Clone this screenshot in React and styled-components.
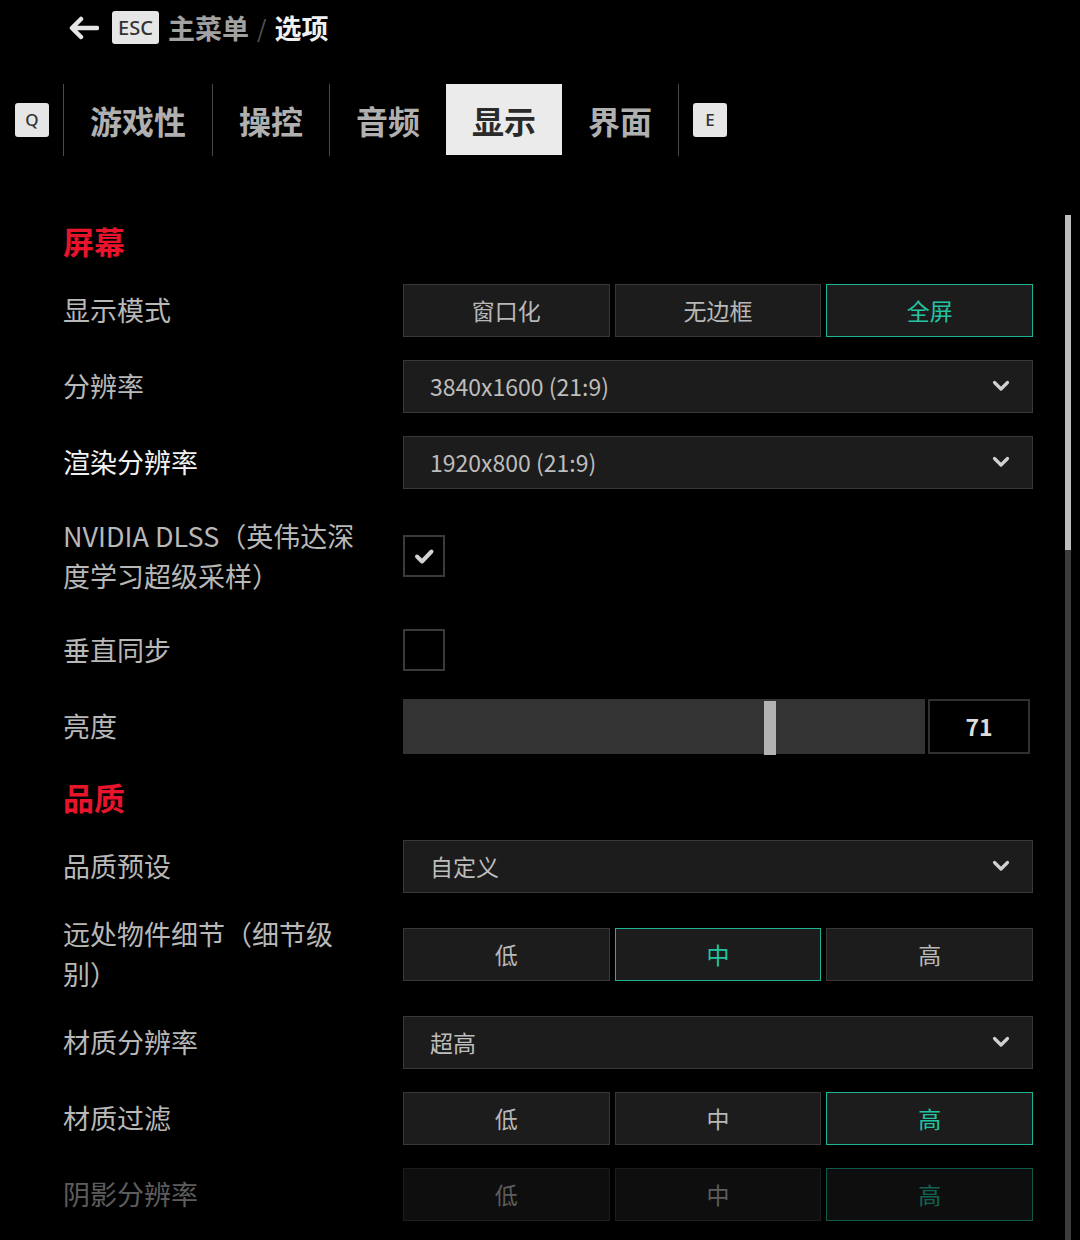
import React from 'react';
import styled, { createGlobalStyle } from 'styled-components';

const GlobalStyle = createGlobalStyle`
  html, body {
    margin: 0;
    padding: 0;
    background: #000;
    overflow: hidden;
  }
  body {
    font-family: "Noto Sans CJK SC", "Noto Sans", sans-serif;
    color: #b8b8b8;
  }
`;

const TEAL = '#1db394';

const Page = styled.div`
  width: 1080px;
  height: 1240px;
  background: #000;
  overflow: hidden;
`;

const Header = styled.div`
  display: flex;
  align-items: center;
  height: 55px;
  padding-left: 67px;
  gap: 9px;
`;

const KeyBadge = styled.span`
  display: inline-flex;
  align-items: center;
  justify-content: center;
  background: #e6e6e6;
  color: #333;
  border-radius: 3px;
  font-family: "Noto Sans", "Liberation Sans", sans-serif;
  font-weight: 500;
  width: ${(p) => p.w || 34}px;
  height: ${(p) => p.h || 34}px;
  font-size: ${(p) => p.fs || 17}px;
  line-height: 1;
`;

const Crumb = styled.span`
  font-size: 27px;
  font-weight: 700;
  color: ${(p) => (p.current ? '#f0f0f0' : '#a2a2a2')};
`;

const Slash = styled.span`
  font-size: 24px;
  color: #555;
  margin: 0 -1px;
`;

const Tabs = styled.div`
  display: flex;
  align-items: center;
  height: 71px;
  margin-top: 29px;
  padding-left: 15px;
`;

const TabDivider = styled.div`
  width: 1px;
  height: 72px;
  background: #4a4a4a;
  margin: ${(p) => p.m || '0'};
`;

const Tab = styled.div`
  height: 71px;
  display: flex;
  align-items: center;
  padding: 0 26px;
  font-size: 32px;
  font-weight: 700;
  background: ${(p) => (p.active ? '#ebebeb' : 'transparent')};
  color: ${(p) => (p.active ? '#2a2a2a' : '#b0b0b0')};
`;

const Main = styled.div`
  display: flex;
  margin-top: 53px;
  padding-left: 63px;
`;

const Settings = styled.div`
  width: 970px;
  display: flex;
  flex-direction: column;
`;

const SectionTitle = styled.div`
  height: 64px;
  display: flex;
  align-items: center;
  font-size: 31px;
  font-weight: 700;
  color: #e8142c;
`;

const Row = styled.div`
  height: ${(p) => p.h || 76}px;
  display: grid;
  grid-template-columns: 340px 630px;
  align-items: center;
  opacity: ${(p) => (p.faded ? 0.5 : 1)};
`;

const Label = styled.div`
  font-size: 27px;
  line-height: 40px;
  color: ${(p) => (p.bright ? '#f2f2f2' : '#b8b8b8')};
`;

const Segments = styled.div`
  display: grid;
  grid-template-columns: repeat(3, 1fr);
  gap: 5px;
  height: 53px;
`;

const Segment = styled.div`
  display: flex;
  align-items: center;
  justify-content: center;
  background: #1c1c1c;
  border: 1px solid ${(p) => (p.active ? TEAL : '#383838')};
  color: ${(p) => (p.active ? '#22c4a2' : '#b8b8b8')};
  font-size: 23px;
`;

const Dropdown = styled.div`
  height: 53px;
  display: flex;
  align-items: center;
  justify-content: space-between;
  background: #1c1c1c;
  border: 1px solid #383838;
  padding: 0 22px 0 26px;
  font-size: 23px;
  color: #bdbdbd;
  box-sizing: border-box;
`;

const Checkbox = styled.div`
  width: 42px;
  height: 42px;
  box-sizing: border-box;
  border: 2px solid #3a3a3a;
  display: flex;
  align-items: center;
  justify-content: center;
`;

const SliderWrap = styled.div`
  display: flex;
  gap: 3px;
  height: 55px;
`;

const Track = styled.div`
  position: relative;
  width: 522px;
  background: #333;
`;

const Thumb = styled.div`
  position: absolute;
  top: 2px;
  bottom: -1px;
  width: 12px;
  background: #b2b2b2;
`;

const ValueBox = styled.div`
  width: 102px;
  box-sizing: border-box;
  border: 2px solid #303030;
  background: #000;
  display: flex;
  align-items: center;
  justify-content: center;
  font-size: 23px;
  font-weight: 700;
  color: #dcdcdc;
`;

const ScrollBar = styled.div`
  margin-left: 32px;
  margin-top: 7px;
  width: 6px;
  height: 1030px;
  background: #3c3c3c;
  display: flex;
  flex-direction: column;
`;

const ScrollThumb = styled.div`
  height: 335px;
  background: #bdbdbd;
`;

const BackArrow = () => (
  <svg width="32" height="24" viewBox="0 0 32 24" style={{ marginRight: 4 }}>
    <path d="M30 12H6M14 3L5 12l9 9" fill="none" stroke="#e6e6e6" strokeWidth="4.5" strokeLinecap="round" strokeLinejoin="round" />
  </svg>
);

const Chevron = () => (
  <svg width="18" height="12" viewBox="0 0 18 12">
    <path d="M2.5 2.5L9 9l6.5-6.5" fill="none" stroke="#d0d0d0" strokeWidth="3.2" strokeLinecap="round" strokeLinejoin="round" />
  </svg>
);

const Check = () => (
  <svg width="22" height="18" viewBox="0 0 22 18">
    <path d="M4 9.5l5 5L18.5 4.5" fill="none" stroke="#d2d2d2" strokeWidth="4" strokeLinecap="round" strokeLinejoin="round" />
  </svg>
);

const SegRow = ({ options, active }) => (
  <Segments>
    {options.map((o, i) => (
      <Segment key={o} active={i === active}>{o}</Segment>
    ))}
  </Segments>
);

const Select = ({ value }) => (
  <Dropdown>
    <span>{value}</span>
    <Chevron />
  </Dropdown>
);

const LEVELS = ['低', '中', '高'];

export default function App() {
  const brightness = 71;
  return (
    <Page>
      <GlobalStyle />
      <Header>
        <BackArrow />
        <KeyBadge w={47} h={33} fs={20}>ESC</KeyBadge>
        <Crumb>主菜单</Crumb>
        <Slash>/</Slash>
        <Crumb current>选项</Crumb>
      </Header>

      <Tabs>
        <KeyBadge>Q</KeyBadge>
        <TabDivider m="0 0 0 14px" />
        <Tab>游戏性</Tab>
        <TabDivider />
        <Tab>操控</Tab>
        <TabDivider />
        <Tab>音频</Tab>
        <Tab active>显示</Tab>
        <Tab>界面</Tab>
        <TabDivider m="0 14px 0 0" />
        <KeyBadge>E</KeyBadge>
      </Tabs>

      <Main>
        <Settings>
          <SectionTitle>屏幕</SectionTitle>
          <Row>
            <Label>显示模式</Label>
            <SegRow options={['窗口化', '无边框', '全屏']} active={2} />
          </Row>
          <Row>
            <Label>分辨率</Label>
            <Select value="3840x1600 (21:9)" />
          </Row>
          <Row>
            <Label bright>渲染分辨率</Label>
            <Select value="1920x800 (21:9)" />
          </Row>
          <Row h={112}>
            <Label>NVIDIA DLSS（英伟达深<br />度学习超级采样）</Label>
            <Checkbox><Check /></Checkbox>
          </Row>
          <Row>
            <Label>垂直同步</Label>
            <Checkbox />
          </Row>
          <Row>
            <Label>亮度</Label>
            <SliderWrap>
              <Track>
                <Thumb style={{ left: `${(brightness / 100) * 522 - 10}px` }} />
              </Track>
              <ValueBox>{brightness}</ValueBox>
            </SliderWrap>
          </Row>

          <SectionTitle>品质</SectionTitle>
          <Row>
            <Label>品质预设</Label>
            <Select value="自定义" />
          </Row>
          <Row h={100}>
            <Label>远处物件细节（细节级<br />别）</Label>
            <SegRow options={LEVELS} active={1} />
          </Row>
          <Row>
            <Label>材质分辨率</Label>
            <Select value="超高" />
          </Row>
          <Row>
            <Label>材质过滤</Label>
            <SegRow options={LEVELS} active={2} />
          </Row>
          <Row faded>
            <Label>阴影分辨率</Label>
            <SegRow options={LEVELS} active={2} />
          </Row>
        </Settings>
        <ScrollBar>
          <ScrollThumb />
        </ScrollBar>
      </Main>
    </Page>
  );
}
